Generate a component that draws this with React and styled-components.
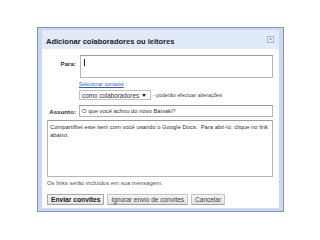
import React from 'react';
import styled, { createGlobalStyle } from 'styled-components';

const Global = createGlobalStyle`
  html, body { margin: 0; padding: 0; background: #fff; }
  body { font-family: "Liberation Sans", Arial, sans-serif; color: #333; }
`;

const Page = styled.div`
  width: 320px;
  height: 240px;
  box-sizing: border-box;
  padding: 27px 0 0 37px;
`;

const Dialog = styled.div`
  width: 247px;
  height: 185px;
  box-sizing: border-box;
  border: 1px solid #8796ad;
  background: #c9d9f1;
  padding: 2px 4px 3px 4px;
  display: flex;
  flex-direction: column;
`;

const TitleBar = styled.div`
  height: 19px;
  box-sizing: border-box;
  flex: none;
  display: flex;
  align-items: center;
  justify-content: space-between;
  padding: 4px 5px 0 4px;
  background: #e1eaf8;
`;

const Title = styled.div`
  font-size: 7.5px;
  font-weight: bold;
  color: #222;
`;

const Close = styled.div`
  width: 5px;
  height: 5px;
  margin-top: -4px;
  border: 1px solid #a8b3c2;
  background: #eef2f8;
  color: #777;
  font-size: 6px;
  line-height: 5px;
  text-align: center;
`;

const Body = styled.div`
  flex: 1;
  background: #fff;
  padding: 6px 6px 0 5px;
  display: flex;
  flex-direction: column;
`;

const FieldRow = styled.div`
  display: grid;
  grid-template-columns: 29px 1fr;
  column-gap: ${p => p.$gap || 3}px;
  align-items: ${p => p.$align || 'center'};
  margin-top: ${p => p.$mt || 0}px;
`;

const Label = styled.div`
  font-size: 6.2px;
  font-weight: bold;
  text-align: right;
  color: #333;
  white-space: nowrap;
  padding-top: ${p => p.$pt || 0}px;
`;

const Field = styled.div`
  box-sizing: border-box;
  height: ${p => p.$h}px;
  border: 1px solid #b5b5b5;
  border-top-color: #9a9a9a;
  background: #fff;
  font-size: 5.85px;
  color: #333;
  padding: ${p => p.$pad || '2px 3px'};
  line-height: 8px;
`;

const Caret = styled.span`
  display: inline-block;
  width: 1px;
  height: 7px;
  background: #222;
  margin-top: 1px;
`;

const Link = styled.a`
  font-size: 5.1px;
  color: #3b5db0;
  text-decoration: underline;
`;

const Inline = styled.div`
  display: flex;
  align-items: center;
  gap: 2px;
`;

const Select = styled.div`
  box-sizing: border-box;
  width: 72px;
  height: 10px;
  border: 1px solid #c2c2c2;
  background: #fff;
  display: flex;
  align-items: center;
  justify-content: space-between;
  padding: 0 4px 0 2px;
  font-size: 6.3px;
  color: #333;
  white-space: nowrap;
`;

const Arrow = styled.span`
  width: 0;
  height: 0;
  border-left: 2px solid transparent;
  border-right: 2px solid transparent;
  border-top: 3px solid #222;
`;

const Small = styled.div`
  font-size: 5.3px;
  color: #444;
  white-space: nowrap;
`;

const Message = styled(Field)`
  margin-top: 3px;
  width: 100%;
  padding: 2px 2px;
`;

const Hint = styled.div`
  font-size: 5.9px;
  color: #555;
  margin-top: 3px;
`;

const Buttons = styled.div`
  display: flex;
  gap: 3px;
  margin-top: 8px;
`;

const Button = styled.div`
  box-sizing: border-box;
  height: 11px;
  padding: 0 3px;
  border: 1px solid ${p => (p.$primary ? '#a8a8a8' : '#c4c4c4')};
  border-bottom-color: #a0a0a0;
  border-radius: 1px;
  background: linear-gradient(#f6f6f6, #e2e2e2);
  font-size: ${p => (p.$primary ? 6.7 : 6.5)}px;
  font-weight: ${p => (p.$primary ? 'bold' : 'normal')};
  color: ${p => (p.$primary ? '#222' : '#444')};
  display: flex;
  align-items: center;
  white-space: nowrap;
`;

export default function App() {
  return (
    <Page>
      <Global />
      <Dialog>
        <TitleBar>
          <Title>Adicionar colaboradores ou leitores</Title>
          <Close>×</Close>
        </TitleBar>
        <Body>
          <FieldRow $align="start" $gap={4}>
            <Label $pt={5}>Para:</Label>
            <Field $h={23}>
              <Caret />
            </Field>
          </FieldRow>
          <FieldRow $mt={3}>
            <span />
            <Link>Selecionar contatos</Link>
          </FieldRow>
          <FieldRow $mt={3}>
            <span />
            <Inline>
              <Select>
                como colaboradores <Arrow />
              </Select>
              <Small>- poderão efectuar alterações</Small>
            </Inline>
          </FieldRow>
          <FieldRow $mt={5}>
            <Label>Assunto:</Label>
            <Field $h={12} $pad="1px 2px">O que você achou do novo Baixaki?</Field>
          </FieldRow>
          <Message $h={57}>
            Compartilhei este item com você usando o Google Docs.&nbsp; Para abri-lo, clique no link abaixo.
          </Message>
          <Hint>Os links serão incluídos em sua mensagem.</Hint>
          <Buttons>
            <Button $primary>Enviar convites</Button>
            <Button>Ignorar envio de convites</Button>
            <Button>Cancelar</Button>
          </Buttons>
        </Body>
      </Dialog>
    </Page>
  );
}
